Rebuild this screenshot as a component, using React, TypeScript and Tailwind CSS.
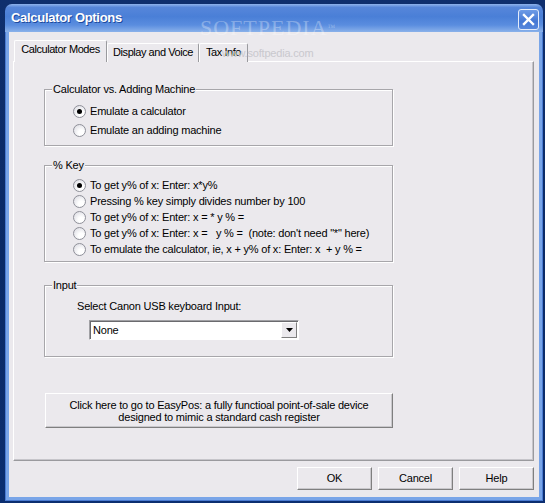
import React from "react";

function Radio({ checked }: { checked?: boolean }) {
  return (
    <span className="w-[13px] h-[13px] rounded-full border border-[#8f9099] bg-[radial-gradient(circle_at_65%_70%,#ffffff_25%,#d6d6de_100%)] flex items-center justify-center shrink-0">
      {checked && <span className="w-[5px] h-[5px] rounded-full bg-black" />}
    </span>
  );
}

function RadioRow({ label, checked }: { label: string; checked?: boolean }) {
  return (
    <div className="flex items-center h-[16px] gap-[4px] pl-[28px]">
      <Radio checked={checked} />
      <span className="whitespace-pre leading-[13px]">{label}</span>
    </div>
  );
}

function Group({
  title,
  className,
  children,
}: {
  title: string;
  className: string;
  children: React.ReactNode;
}) {
  return (
    <div
      className={
        "w-[349px] ml-[30px] border border-[#a7a6aa] shadow-[inset_1px_1px_0_#ffffff,1px_1px_0_#ffffff] " +
        className
      }
    >
      <span className="block w-fit -mt-[7px] ml-[7px] px-[1px] leading-[13px] bg-[#ebe9ed]">
        {title}
      </span>
      {children}
    </div>
  );
}

function Btn({ label }: { label: string }) {
  return (
    <div className="w-[75px] h-[23px] flex items-center justify-center border border-t-white border-l-white border-r-[#7f7f7f] border-b-[#7f7f7f] shadow-[inset_-1px_-1px_0_#c9c8cc] leading-[13px]">
      {label}
    </div>
  );
}

export default function App() {
  return (
    <div className="relative w-[545px] h-[503px] overflow-hidden bg-[linear-gradient(180deg,#0f2f6e_0%,#0a2a66_50%,#0b2e70_100%)] pt-[4px] pl-[5px] font-['Liberation_Sans',Arial,sans-serif] text-[11px] text-black tracking-[-0.2px]">
      <div className="w-[538px] h-[497px] flex flex-col rounded-t-[7px] overflow-hidden">
        {/* Title bar */}
        <div className="h-[28px] shrink-0 flex items-start justify-between pl-[6px] pr-[4px] bg-[linear-gradient(180deg,#8fb3ec_0%,#5686da_12%,#4a7fd7_45%,#5a8ddf_75%,#8ab1ea_100%)]">
          <span className="mt-[6px] text-[13px] leading-[16px] font-bold text-white tracking-[-0.3px] [text-shadow:1px_1px_0_#1d4a9e]">
            Calculator Options
          </span>
          <div className="mt-[5px] w-[21px] h-[21px] rounded-[3px] border border-[#e4ecfa] bg-[linear-gradient(180deg,#6d9be6_0%,#4578d4_60%,#5687dc_100%)] flex items-center justify-center">
            <svg width="13" height="13" viewBox="0 0 13 13">
              <path d="M2 2 L11 11 M11 2 L2 11" stroke="#ffffff" strokeWidth="2.4" strokeLinecap="square" />
            </svg>
          </div>
        </div>
        {/* Frame */}
        <div className="flex-1 bg-[#79a5e8] px-[4px] pb-[4px] shadow-[inset_1px_0_0_#4a7bd2,inset_-1px_0_0_#4a7bd2,inset_0_-1px_0_#4a7bd2]">
          <div className="h-[465px] bg-[#ebe9ed] pt-[8px]">
            {/* Tabs */}
            <div className="flex items-end ml-[5px] h-[22px]">
              <div className="relative z-10 w-[93px] h-[22px] bg-[#ebe9ed] border-l border-t border-r border-l-white border-t-white border-r-[#9a9a9e] rounded-t-[2px] flex justify-center pt-[2px] leading-[13px] tracking-[-0.45px]">
                Calculator Modes
              </div>
              <div className="w-[92px] h-[19px] bg-[#ebe9ed] border-l border-t border-r border-l-white border-t-white border-r-[#9a9a9e] rounded-t-[2px] flex justify-center pt-[2px] leading-[13px] tracking-[-0.45px]">
                Display and Voice
              </div>
              <div className="w-[49px] h-[19px] bg-[#ebe9ed] border-l border-t border-r border-l-white border-t-white border-r-[#9a9a9e] rounded-t-[2px] flex justify-center pt-[2px] leading-[13px] tracking-[-0.45px]">
                Tax Info
              </div>
            </div>
            {/* Panel */}
            <div className="-mt-[1px] ml-[4px] w-[521px] h-[400px] border border-t-white border-l-white border-r-[#9a9a9e] border-b-[#9a9a9e] shadow-[inset_-1px_-1px_0_#c6c5ca] pt-[27px]">
              <Group title="Calculator vs. Adding Machine" className="h-[57px]">
                <div className="mt-[7px] flex flex-col gap-[3px]">
                  <RadioRow label="Emulate a calculator" checked />
                  <RadioRow label="Emulate an adding machine" />
                </div>
              </Group>
              <Group title="% Key" className="h-[97px] mt-[19px]">
                <div className="mt-[5px] flex flex-col">
                  <RadioRow label="To get y% of x: Enter: x*y%" checked />
                  <RadioRow label="Pressing % key simply divides number by 100" />
                  <RadioRow label="To get y% of x: Enter: x = * y % =" />
                  <RadioRow label={'To get y% of x: Enter: x =   y % =  (note: don\'t need "*" here)'} />
                  <RadioRow label="To emulate the calculator, ie, x + y% of x: Enter: x  + y % =" />
                </div>
              </Group>
              <Group title="Input" className="h-[72px] mt-[23px]">
                <div className="mt-[8px] ml-[32px] leading-[13px]">
                  Select Canon USB keyboard Input:
                </div>
                <div className="mt-[7px] ml-[44px] w-[210px] h-[20px] bg-white border border-t-[#a0a0a4] border-l-[#a0a0a4] border-r-white border-b-white shadow-[inset_1px_1px_0_#6a6a6e] flex items-center justify-between">
                  <span className="pl-[3px] leading-[13px]">None</span>
                  <div className="w-[16px] h-[16px] mr-[1px] bg-[#ebe9ed] border border-t-white border-l-white border-r-[#7f7f7f] border-b-[#7f7f7f] flex items-center justify-center">
                    <svg width="7" height="4" viewBox="0 0 7 4">
                      <path d="M0 0 H7 L3.5 4 Z" fill="#000000" />
                    </svg>
                  </div>
                </div>
              </Group>
              <div className="mt-[36px] ml-[31px] w-[348px] h-[35px] border border-t-white border-l-white border-r-[#7f7f7f] border-b-[#7f7f7f] shadow-[inset_-1px_-1px_0_#c9c8cc] flex flex-col items-center justify-center leading-[12px]">
                <span>Click here to go to EasyPos: a fully functioal point-of-sale device</span>
                <span>designed to mimic a standard cash register</span>
              </div>
            </div>
            {/* Buttons */}
            <div className="mt-[6px] flex justify-end gap-[6px] pr-[5px]">
              <Btn label="OK" />
              <Btn label="Cancel" />
              <Btn label="Help" />
            </div>
          </div>
        </div>
      </div>
      {/* Watermark overlay */}
      <div className="absolute left-[200px] top-[17px] text-[22px] leading-[22px] font-['Liberation_Serif',serif] tracking-[1px] text-white/30 pointer-events-none">
        SOFTPEDIA<span className="text-[8px] align-top">™</span>
      </div>
      <div className="absolute left-[222px] top-[47px] text-[11px] leading-[12px] text-[#c9c8cd] pointer-events-none">
        www.softpedia.com
      </div>
    </div>
  );
}
